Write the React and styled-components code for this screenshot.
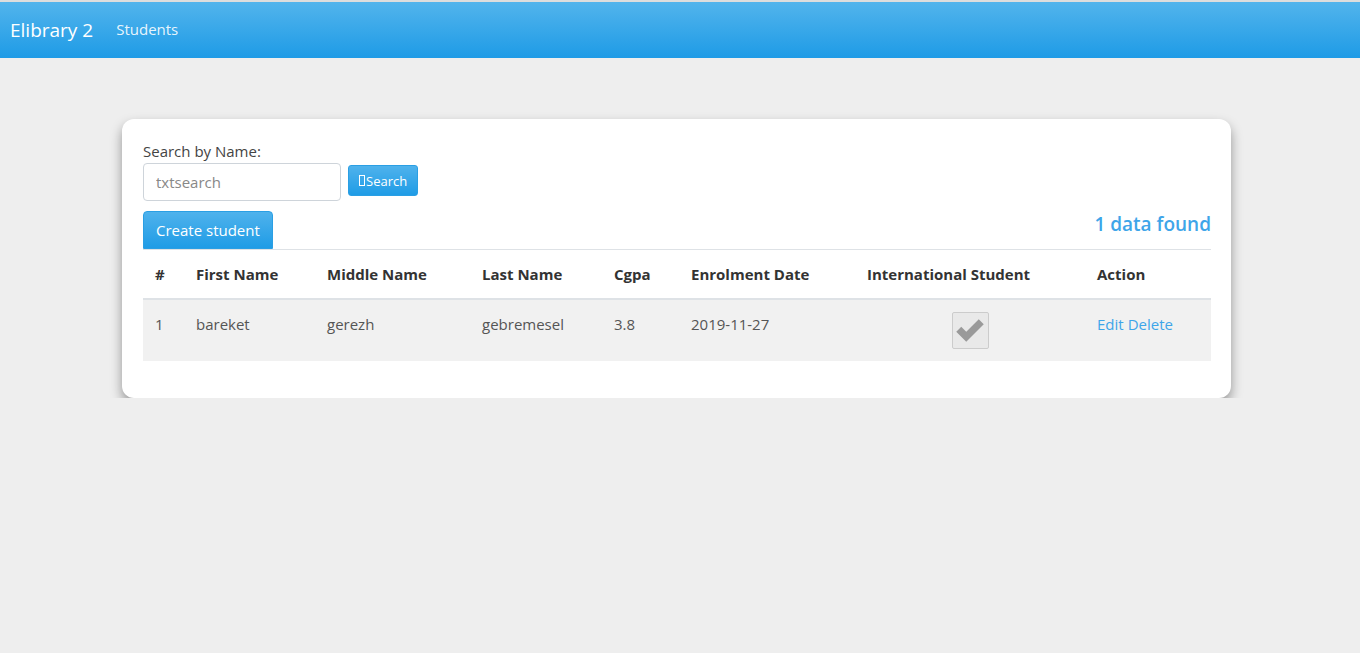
import React, { useState } from 'react'
import styled, { createGlobalStyle } from 'styled-components'

const GlobalStyle = createGlobalStyle`
  body {
    margin: 0;
    background: #eeeeee;
    font-family: "Open Sans", "Noto Sans", Arial, sans-serif;
    color: #444;
  }
  * { box-sizing: border-box; }
`;

const Navbar = styled.nav`
  display: flex;
  align-items: center;
  height: 58px;
  border-top: 2px solid #dddddd;
  background: linear-gradient(to bottom, #52b4ec, #1e9be6);
  padding: 0 10px;
`;

const Brand = styled.a`
  color: #fff;
  font-size: 19px;
  margin-right: 23px;
  text-decoration: none;
`;

const NavLink = styled.a`
  color: rgba(255, 255, 255, 0.9);
  font-size: 15px;
  text-decoration: none;
  margin-bottom: 2px;
`;

const Card = styled.div`
  width: 1109px;
  margin: 61px 0 0 122px;
  background: #fff;
  border-radius: 12px;
  box-shadow: 0 6px 12px rgba(0, 0, 0, 0.38);
  padding: 21px 20px 37px 21px;
`;

const Label = styled.label`
  display: block;
  font-size: 15px;
  line-height: 23px;
  color: #444;
`;

const SearchRow = styled.div`
  display: flex;
  align-items: center;
  gap: 7px;
`;

const Input = styled.input`
  width: 198px;
  height: 38px;
  border: 1px solid #ced4da;
  border-radius: 4px;
  padding: 0 12px;
  font: inherit;
  font-size: 15px;
  color: #555;
  &::placeholder { color: #888; }
`;

const BlueButton = styled.button`
  border: 1px solid #2a9fe4;
  border-radius: ${p => (p.small ? '3px' : '4px 4px 0 0')};
  background: linear-gradient(to bottom, #4fb2ec, #1f9ce6);
  color: #fff;
  font-family: inherit;
  font-size: ${p => (p.small ? '13px' : '15px')};
  height: ${p => (p.small ? '31px' : '38px')};
  padding: ${p => (p.small ? '0 10px' : '0 12px')};
  margin-top: ${p => (p.small ? '-3px' : '0')};
  display: inline-flex;
  align-items: center;
  cursor: pointer;
`;

const Tofu = styled.span`
  display: inline-block;
  width: 6px;
  height: 11px;
  border: 1px solid #fff;
  margin-right: 1px;
`;

const Toolbar = styled.div`
  display: flex;
  justify-content: space-between;
  align-items: center;
  margin-top: 10px;
  border-bottom: 1px solid #dee2e6;
`;

const Found = styled.span`
  color: #3ea5e9;
  font-size: 19px;
  font-weight: 600;
  margin-bottom: 12px;
`;

const Table = styled.table`
  width: 100%;
  border-collapse: collapse;
  table-layout: fixed;
  font-size: 15px;
`;

const Th = styled.th`
  text-align: left;
  font-weight: 700;
  color: #333;
  padding: 12px 12px 12px;
  line-height: 24px;
  border-bottom: 2px solid #dee2e6;
  width: ${p => p.w}px;
`;

const Row = styled.tr`
  background: #f1f1f1;
`;

const Td = styled.td`
  padding: 12px;
  line-height: 24px;
  color: #555;
  vertical-align: ${p => (p.center ? 'middle' : 'top')};
  text-align: ${p => (p.center ? 'center' : 'left')};
`;

const CheckBox = styled.span`
  display: inline-flex;
  align-items: center;
  justify-content: center;
  width: 37px;
  height: 37px;
  background: #e9e9e9;
  border: 1px solid #cccccc;
  border-radius: 2px;
  vertical-align: middle;
`;

const Link = styled.a`
  color: #3ea5e9;
  text-decoration: none;
  margin-right: 4px;
`;

const columns = [
  ['#', 41],
  ['First Name', 131],
  ['Middle Name', 155],
  ['Last Name', 132],
  ['Cgpa', 77],
  ['Enrolment Date', 176],
  ['International Student', 230],
  ['Action', 126],
];

const students = [
  { id: 1, first: 'bareket', middle: 'gerezh', last: 'gebremesel', cgpa: '3.8', date: '2019-11-27', intl: true },
];

export default function App() {
  const [search, setSearch] = useState('');

  return (
    <>
      <GlobalStyle />
      <Navbar>
        <Brand href="#">Elibrary 2</Brand>
        <NavLink href="#">Students</NavLink>
      </Navbar>
      <Card>
        <Label>Search by Name:</Label>
        <SearchRow>
          <Input placeholder="txtsearch" value={search} onChange={e => setSearch(e.target.value)} />
          <BlueButton small><Tofu />Search</BlueButton>
        </SearchRow>
        <Toolbar>
          <BlueButton>Create student</BlueButton>
          <Found>{students.length} data found</Found>
        </Toolbar>
        <Table>
          <thead>
            <tr>
              {columns.map(([name, w]) => (
                <Th key={name} w={w}>{name}</Th>
              ))}
            </tr>
          </thead>
          <tbody>
            {students.map(s => (
              <Row key={s.id}>
                <Td>{s.id}</Td>
                <Td>{s.first}</Td>
                <Td>{s.middle}</Td>
                <Td>{s.last}</Td>
                <Td>{s.cgpa}</Td>
                <Td>{s.date}</Td>
                <Td center>
                  <CheckBox>
                    {s.intl && (
                      <svg width="30" height="25" viewBox="0 0 24 20">
                        <path d="M1 11 L5 7 L9 11 L19 1 L23 5 L9 19 Z" fill="#9a9a9a" />
                      </svg>
                    )}
                  </CheckBox>
                </Td>
                <Td>
                  <Link href="#">Edit</Link>
                  <Link href="#">Delete</Link>
                </Td>
              </Row>
            ))}
          </tbody>
        </Table>
      </Card>
    </>
  );
}
